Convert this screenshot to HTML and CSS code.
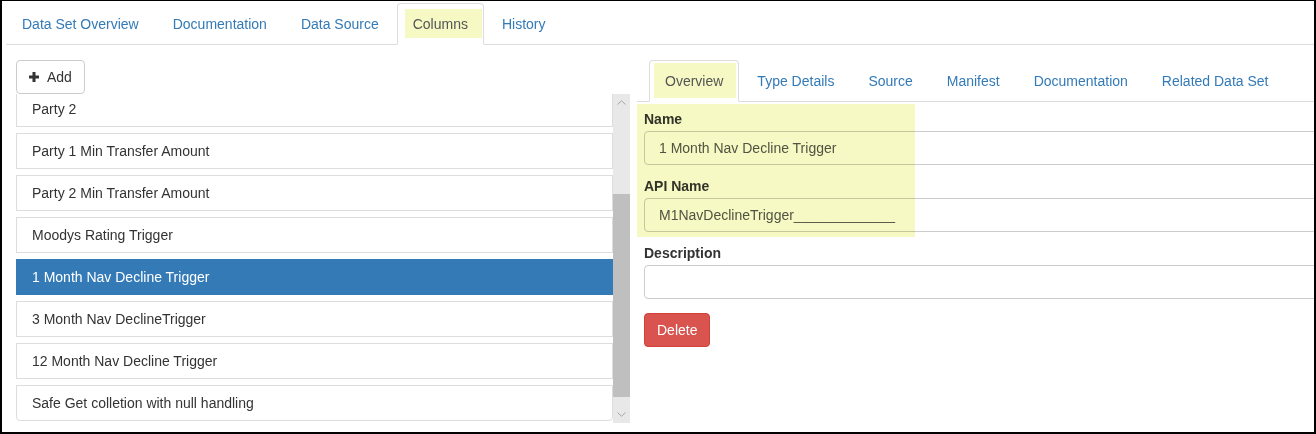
FILE: index.html
```html
<!DOCTYPE html>
<html>
<head>
<meta charset="utf-8">
<title>Columns</title>
<link rel="stylesheet" href="styles.css">
</head>
<body>
<div class="frame">
  <ul class="tabs top-tabs">
    <li><a>Data Set Overview</a></li>
    <li><a>Documentation</a></li>
    <li><a>Data Source</a></li>
    <li class="active"><a><span class="hl hl-top">Columns</span></a></li>
    <li><a>History</a></li>
  </ul>
  <div class="main">
    <div class="left">
      <button class="btn btn-add"><svg class="plus" width="10" height="10" viewBox="0 0 10 10"><rect x="3.5" y="0" width="3" height="10" fill="#333"/><rect x="0" y="3.5" width="10" height="3" fill="#333"/></svg>Add</button>
      <div class="listbox">
        <div class="viewport">
          <ul class="list">
            <li>Party 2</li>
            <li>Party 1 Min Transfer Amount</li>
            <li>Party 2 Min Transfer Amount</li>
            <li>Moodys Rating Trigger</li>
            <li class="sel">1 Month Nav Decline Trigger</li>
            <li>3 Month Nav DeclineTrigger</li>
            <li>12 Month Nav Decline Trigger</li>
            <li>Safe Get colletion with null handling</li>
          </ul>
        </div>
        <div class="scrollbar">
          <div class="sb-btn"><svg width="9" height="5" viewBox="0 0 9 5"><polyline points="0.5,4.5 4.5,0.8 8.5,4.5" fill="none" stroke="#a6a6a6" stroke-width="1"/></svg></div>
          <div class="sb-track"><div class="sb-thumb"></div></div>
          <div class="sb-btn"><svg width="9" height="5" viewBox="0 0 9 5"><polyline points="0.5,0.5 4.5,4.2 8.5,0.5" fill="none" stroke="#a6a6a6" stroke-width="1"/></svg></div>
        </div>
      </div>
    </div>
    <div class="right">
      <ul class="tabs sub-tabs">
        <li class="active"><a><span class="hl hl-sub">Overview</span></a></li>
        <li><a>Type Details</a></li>
        <li><a>Source</a></li>
        <li><a>Manifest</a></li>
        <li><a>Documentation</a></li>
        <li><a>Related Data Set</a></li>
      </ul>
      <div class="form">
        <div class="group">
          <label class="label">Name</label>
          <input class="input" type="text" value="1 Month Nav Decline Trigger">
        </div>
        <div class="group">
          <label class="label">API Name</label>
          <input class="input" type="text" value="M1NavDeclineTrigger_____________">
        </div>
        <div class="group group-last">
          <label class="label">Description</label>
          <input class="input" type="text" value="">
        </div>
        <button class="btn btn-danger">Delete</button>
      </div>
      <div class="marker"></div>
    </div>
  </div>
</div>
</body>
</html>
```
FILE: styles.css
```css
* { box-sizing: border-box; }
html, body { margin: 0; padding: 0; background: #fff; }
body {
  font-family: "Liberation Sans", Arial, sans-serif;
  font-size: 14px;
  line-height: 20px;
  color: #333;
}
.frame {
  width: 1316px;
  height: 434px;
  border: 2px solid #000;
  border-top-width: 1px;
  overflow: hidden;
  background: #fff;
}
.tabs {
  list-style: none;
  margin: 0;
  padding: 0;
  display: flex;
  border-bottom: 1px solid #ddd;
}
.tabs li { margin-bottom: -1px; flex: none; }
.tabs a {
  display: block;
  padding: 10px 15px;
  border: 1px solid transparent;
  border-radius: 4px 4px 0 0;
  margin-right: 2px;
  color: #337ab7;
  line-height: 20px;
  white-space: nowrap;
}
.tabs .active a {
  color: #555;
  background: #fff;
  border-color: #ddd #ddd transparent;
}
.top-tabs { margin: 2px 0 0 4px; }
.hl { background: #f6f9c4; }
.hl-top { padding: 7px 14px 6px 8px; margin: 0 -14px 0 -8px; }
.hl-sub { padding: 10px 13px 9px 11px; margin: 0 -13px 0 -11px; }

.main {
  display: flex;
  gap: 7px;
  padding: 15px 0 0 14px;
}
.left {
  width: 614px;
  flex: none;
  display: flex;
  flex-direction: column;
}
.btn {
  font: inherit;
  line-height: 20px;
  height: 34px;
  padding: 6px 12px;
  border: 1px solid #ccc;
  border-radius: 4px;
  background: #fff;
  color: #333;
  display: flex;
  align-items: center;
}
.btn-add { align-self: flex-start; }
.plus { margin-right: 8px; }
.listbox {
  display: flex;
  height: 329px;
}
.viewport { flex: 1; overflow: hidden; }
.list {
  list-style: none;
  margin: -3px 0 0;
  padding: 0;
}
.list li {
  padding: 7px 15px;
  border: 1px solid #ddd;
  margin-bottom: 6px;
  background: #fff;
  line-height: 20px;
  white-space: nowrap;
}
.list li:last-child { border-radius: 0 0 4px 4px; }
.list li.sel {
  background: #337ab7;
  border-color: #337ab7;
  color: #fff;
}
.scrollbar {
  width: 17px;
  flex: none;
  background: #e8e8e8;
  display: flex;
  flex-direction: column;
}
.sb-btn {
  height: 17px;
  flex: none;
  display: flex;
  align-items: center;
  justify-content: center;
}
.sb-btn svg { display: block; }
.sb-track { flex: 1; }
.sb-thumb {
  margin-top: 83px;
  height: 203px;
  background: #bfbfbf;
}

.right {
  flex: none;
  width: 720px;
  position: relative;
}
.sub-tabs { padding-left: 12px; }
.form { padding: 7px 0 0 7px; }
.group { margin-bottom: 11px; }
.group-last { margin-bottom: 14px; }
.label {
  display: block;
  font-weight: bold;
  margin-bottom: 2px;
  line-height: 20px;
}
.input {
  display: block;
  width: 100%;
  height: 34px;
  padding: 6px 14px;
  border: 1px solid #ccc;
  border-radius: 4px;
  background: transparent;
  color: #555;
  font: inherit;
  line-height: 20px;
  outline: none;
}
.btn-danger {
  background: #d9534f;
  border-color: #d43f3a;
  color: #fff;
}
.marker {
  position: absolute;
  left: 0;
  top: 44px;
  width: 278px;
  height: 133px;
  background: #f6f9c4;
  mix-blend-mode: multiply;
  pointer-events: none;
}
```
